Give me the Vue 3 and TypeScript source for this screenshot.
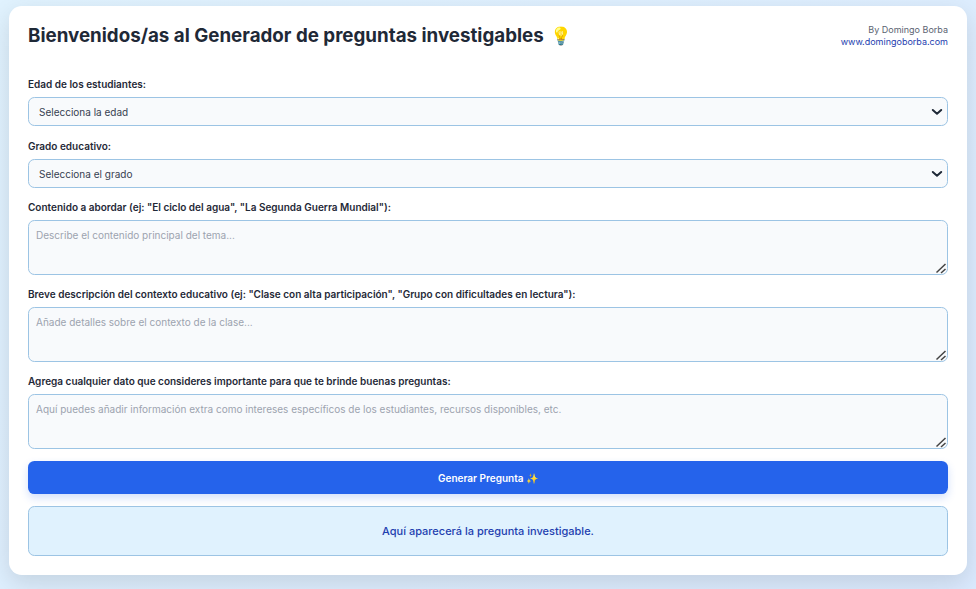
<script setup lang="ts">
interface Field {
  label: string;
  placeholder: string;
}

const textFields: Field[] = [
  {
    label: 'Contenido a abordar (ej: "El ciclo del agua", "La Segunda Guerra Mundial"):',
    placeholder: 'Describe el contenido principal del tema...',
  },
  {
    label: 'Breve descripción del contexto educativo (ej: "Clase con alta participación", "Grupo con dificultades en lectura"):',
    placeholder: 'Añade detalles sobre el contexto de la clase...',
  },
  {
    label: 'Agrega cualquier dato que consideres importante para que te brinde buenas preguntas:',
    placeholder: 'Aquí puedes añadir información extra como intereses específicos de los estudiantes, recursos disponibles, etc.',
  },
];
</script>

<template>
  <div class="page">
    <main class="card">
      <header class="head">
        <h1 class="title">Bienvenidos/as al Generador de preguntas investigables <span class="emoji">💡</span></h1>
        <div class="credit">
          <div>By Domingo Borba</div>
          <a class="link" href="#">www.domingoborba.com</a>
        </div>
      </header>

      <div class="field first">
        <label class="label">Edad de los estudiantes:</label>
        <select class="select"><option>Selecciona la edad</option></select>
      </div>
      <div class="field second">
        <label class="label">Grado educativo:</label>
        <select class="select"><option>Selecciona el grado</option></select>
      </div>

      <div v-for="f in textFields" :key="f.label" class="field area-field">
        <label class="label">{{ f.label }}</label>
        <textarea class="area" :placeholder="f.placeholder"></textarea>
      </div>

      <button class="btn" type="button">Generar Pregunta ✨</button>
      <div class="result">Aquí aparecerá la pregunta investigable.</div>
    </main>
  </div>
</template>

<style>
html, body { margin: 0; background: #dbeafe; }
</style>

<style scoped>
.page {
  box-sizing: border-box;
  height: 589px;
  padding: 6px 9px 14px;
  background: linear-gradient(135deg, #e0f2fe 0%, #dbeafe 100%);
  font-family: Inter, sans-serif;
  overflow: hidden;
}
.card {
  box-sizing: border-box;
  height: 569px;
  padding: 17px 19px 19px;
  background: #fff;
  border-radius: 12.8px;
  box-shadow: 0 8px 24px rgba(0, 0, 0, 0.12);
}
.head {
  display: flex;
  justify-content: space-between;
  align-items: flex-start;
  height: 55px;
}
.title {
  margin: 0;
  font-size: 18.75px;
  line-height: 26px;
  font-weight: 700;
  color: #1f2937;
}
.emoji { font-size: 17.5px; margin-left: 2px; }
.credit {
  padding-top: 1px;
  text-align: right;
  font-size: 9px;
  line-height: 12px;
  color: #5b6472;
}
.link { color: #1e40af; text-decoration: none; }
.field { display: flex; flex-direction: column; }
.label {
  font-size: 10px;
  line-height: 13px;
  font-weight: 600;
  color: #1f2937;
  margin-bottom: 6px;
}
.first { margin-top: 0; }
.second { margin-top: 14px; }
.area-field { margin-top: 13px; }
.select,
.area {
  box-sizing: border-box;
  width: 100%;
  border: 1px solid #9cc4e4;
  border-radius: 6.4px;
  background-color: #f8fafc;
  font-family: Inter, sans-serif;
  font-size: 10px;
  color: #374151;
}
.select {
  height: 29px;
  padding: 0 24px 0 10px;
  appearance: none;
  -webkit-appearance: none;
  background-image: url("data:image/svg+xml,%3Csvg xmlns='http://www.w3.org/2000/svg' width='12' height='8' viewBox='0 0 12 8'%3E%3Cpath d='M1.8 2 L6 5.8 L10.2 2' fill='none' stroke='%231f2937' stroke-width='2' stroke-linecap='round' stroke-linejoin='round'/%3E%3C/svg%3E");
  background-repeat: no-repeat;
  background-position: right 4px center;
  background-size: 12px 8px;
}
.area {
  display: block;
  height: 55px;
  padding: 8px 8px 8px 7px;
  line-height: 13px;
}
.area::placeholder { color: #9ca3af; }
.area::-webkit-resizer {
  background-image: url("data:image/svg+xml,%3Csvg xmlns='http://www.w3.org/2000/svg' width='15' height='15' viewBox='0 0 15 15'%3E%3Cpath d='M4.5 13.5 L13.5 5 M9 14 L13.5 10' fill='none' stroke='%23444' stroke-width='1.5'/%3E%3C/svg%3E");
  background-repeat: no-repeat;
}
.btn {
  display: block;
  box-sizing: border-box;
  width: 100%;
  height: 33px;
  margin-top: 12px;
  border: 0;
  border-radius: 6.4px;
  background: #2563eb;
  color: #fff;
  font-family: Inter, sans-serif;
  font-size: 10px;
  font-weight: 600;
  box-shadow: 0 4px 8px rgba(37, 99, 235, 0.2);
}
.result {
  box-sizing: border-box;
  height: 50px;
  margin-top: 12px;
  display: flex;
  align-items: center;
  justify-content: center;
  border: 1px solid #9cc4e4;
  border-radius: 6.4px;
  background: #e0f2fe;
  color: #1e40af;
  font-size: 11px;
  font-weight: 500;
}
</style>
